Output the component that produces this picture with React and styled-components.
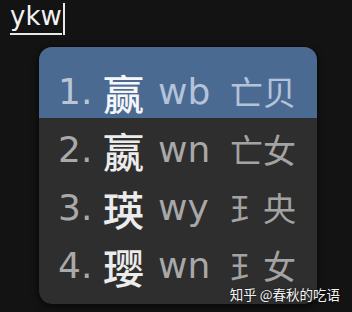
import React from "react";
import styled, { createGlobalStyle } from "styled-components";

const GlobalStyle = createGlobalStyle`
  html, body {
    margin: 0;
    padding: 0;
    background: #131313;
  }
  body {
    font-family: "DejaVu Sans", "Noto Sans CJK SC", sans-serif;
  }
`;

const Screen = styled.div`
  position: relative;
  width: 352px;
  height: 312px;
  overflow: hidden;
  background: #131313;
`;

const Composition = styled.div`
  display: flex;
  padding: 3px 0 0 10px;
  height: 32px;
`;

const Preedit = styled.span`
  display: inline-block;
  height: 30px;
  line-height: 26px;
  font-size: 26px;
  color: #f2f2f2;
  border-bottom: 2px solid #e8e8e8;
`;

const Caret = styled.span`
  display: inline-block;
  width: 2px;
  height: 32px;
  margin-left: 1px;
  background: #e8e8e8;
`;

const Popup = styled.div`
  margin: 11px 0 0 38px;
  width: 280px;
  height: 259px;
  box-sizing: border-box;
  padding-bottom: 13px;
  background: #2e2e2e;
  border: 1px solid #0c0c0c;
  border-radius: 14px;
  overflow: hidden;
  box-shadow: 0 2px 6px rgba(0, 0, 0, 0.6);
`;

const Row = styled.div`
  display: grid;
  grid-template-columns: 45px 55px 72px auto;
  align-items: center;
  box-sizing: border-box;
  height: ${(p) => (p.$first ? 71 : 58)}px;
  padding: ${(p) => (p.$first ? 19 : 6)}px 0 0 19px;
  background: ${(p) => (p.$active ? "#4b6a92" : "transparent")};
`;

const Index = styled.span`
  font-size: 36px;
  line-height: 1;
  color: ${(p) => (p.$active ? "#bac6d6" : "#a9a9a9")};
`;

const Word = styled.span`
  font-family: "Noto Sans CJK SC", sans-serif;
  font-size: 41px;
  font-weight: 500;
  line-height: 1;
  color: ${(p) => (p.$active ? "#f4f6f9" : "#ececec")};
`;

const Code = styled.span`
  font-size: 36px;
  line-height: 1;
  color: ${(p) => (p.$active ? "#b3c3da" : "#a8a8a8")};
`;

const Roots = styled.span`
  font-family: "Noto Sans CJK SC", sans-serif;
  font-size: 33px;
  line-height: 0.9;
  color: ${(p) => (p.$active ? "#b3c3da" : "#a3a3a3")};
`;

const Watermark = styled.div`
  position: absolute;
  right: 12px;
  bottom: 11px;
  font-family: "Noto Sans CJK SC", sans-serif;
  font-size: 13.5px;
  line-height: 1;
  color: #f4f4f4;
  text-shadow: 0 0 2px rgba(0, 0, 0, 0.8);
`;

const candidates = [
  { word: "赢", code: "wb", roots: "亡贝" },
  { word: "嬴", code: "wn", roots: "亡女" },
  { word: "瑛", code: "wy", roots: "⺩央" },
  { word: "璎", code: "wn", roots: "⺩女" },
];

export default function App() {
  return (
    <Screen>
      <GlobalStyle />
      <Composition>
        <Preedit>ykw</Preedit>
        <Caret />
      </Composition>
      <Popup>
        {candidates.map((c, i) => {
          const active = i === 0;
          return (
            <Row key={i} $first={i === 0} $active={active}>
              <Index $active={active}>{i + 1}.</Index>
              <Word $active={active}>{c.word}</Word>
              <Code $active={active}>{c.code}</Code>
              <Roots $active={active}>{c.roots}</Roots>
            </Row>
          );
        })}
      </Popup>
      <Watermark>知乎 @春秋的吃语</Watermark>
    </Screen>
  );
}
